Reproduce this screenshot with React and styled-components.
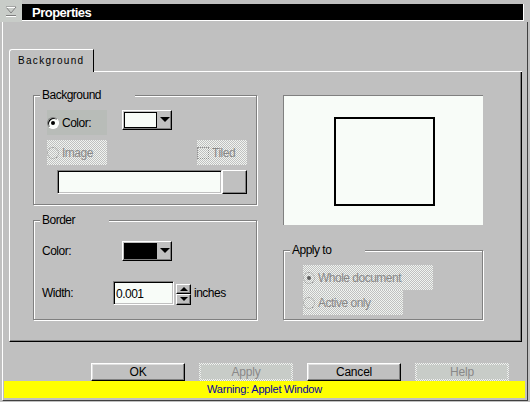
import React from "react"
import styled, { createGlobalStyle } from "styled-components"

const dither = "repeating-conic-gradient(#c0c0c0 0 25%, #f0f4f0 0 50%) 0 0 / 2px 2px"

const GlobalStyle = createGlobalStyle`
  html, body {
    margin: 0;
    padding: 0;
    background: #c0c0c0;
  }
  body {
    font-family: "Liberation Sans", Arial, sans-serif;
    font-size: 12px;
    letter-spacing: -0.5px;
    color: #000;
  }
`

const Window = styled.div`
  width: 530px;
  height: 402px;
  box-sizing: border-box;
  background: #c0c0c0;
  display: flex;
  flex-direction: column;
  overflow: hidden;
`

const TitleRow = styled.div`
  display: flex;
  height: 22px;
  flex-shrink: 0;
`

const SysIcon = styled.div`
  width: 22px;
  height: 22px;
  background: #c8ccc8;
  display: flex;
  align-items: center;
  justify-content: center;
`

const TitleBar = styled.div`
  margin-top: 4px;
  width: 502px;
  height: 17px;
  background: #000;
  border-right: 1px solid #fff;
  border-bottom: 1px solid #fff;
  color: #fff;
  font-weight: bold;
  font-size: 13px;
  letter-spacing: -0.5px;
  line-height: 17px;
  padding-left: 10px;
  box-sizing: border-box;
`

const Frame = styled.div`
  flex: 1;
  margin: 0 2px 1px 2px;
  border-left: 1px solid #fff;
  border-right: 1px solid #404040;
  border-bottom: 1px solid #404040;
  padding-top: 27px;
  display: flex;
  flex-direction: column;
`

const TabStrip = styled.div`
  display: flex;
  height: 23px;
  margin: 0 5px 0 6px;
`

const Tab = styled.div`
  width: 85px;
  box-sizing: border-box;
  border-top: 1px solid #fff;
  border-left: 1px solid #fff;
  border-right: 1px solid #000;
  border-top-left-radius: 3px;
  padding-left: 8px;
  font-size: 10px;
  letter-spacing: 1.3px;
  line-height: 22px;
`

const TabFiller = styled.div`
  flex: 1;
  border-bottom: 1px solid #fff;
`

const Panel = styled.div`
  height: 270px;
  box-sizing: border-box;
  margin: 0 5px 0 6px;
  border-left: 1px solid #fff;
  border-right: 1px solid #000;
  border-bottom: 1px solid #000;
  box-shadow: inset -1px -1px 0 #808080;
  padding: 23px 0 0 23px;
  display: grid;
  grid-template-columns: 224px 200px;
  column-gap: 26px;
  align-items: start;
`

const Column = styled.div`
  display: flex;
  flex-direction: column;
  gap: ${(p) => p.$gap}px;
`

const Group = styled.div`
  position: relative;
  box-sizing: border-box;
  height: ${(p) => p.$h}px;
  border: 1px solid #808080;
  box-shadow: 1px 1px 0 #fff, inset 1px 1px 0 #fff;
  padding: ${(p) => p.$pad};
  display: flex;
  flex-direction: column;
`

const Legend = styled.span`
  position: absolute;
  top: -8px;
  left: 6px;
  padding: 0 34px 0 2px;
  background: #c0c0c0;
  line-height: 14px;
`

const Row = styled.div`
  display: flex;
  align-items: ${(p) => p.$align || "flex-start"};
  margin-top: ${(p) => p.$mt || 0}px;
`

const Option = styled.div`
  width: ${(p) => p.$w}px;
  height: 25px;
  display: flex;
  align-items: center;
  background: ${(p) => (p.$disabled ? dither : "#b8bcb8")};
  color: ${(p) => (p.$disabled ? "#888" : "#000")};
  margin-left: ${(p) => p.$ml || 0}px;
`

const Radio = styled.span`
  width: 12px;
  height: 12px;
  box-sizing: border-box;
  border-radius: 50%;
  border: 1px solid;
  border-color: ${(p) => (p.$disabled ? "#909090" : "#808080 #fff #fff #808080")};
  border-style: ${(p) => (p.$disabled ? "dotted" : "solid")};
  background: ${(p) => (p.$disabled ? "transparent" : "#f8fcf8")};
  box-shadow: ${(p) => (p.$disabled ? "none" : "inset 1px 1px 0 #000")};
  display: flex;
  align-items: center;
  justify-content: center;
  margin-right: 3px;
  &::after {
    content: "";
    width: 4px;
    height: 4px;
    border-radius: 50%;
    background: ${(p) => (p.$disabled ? "#606060" : "#000")};
    display: ${(p) => (p.$checked ? "block" : "none")};
  }
`

const Check = styled.span`
  width: 12px;
  height: 12px;
  box-sizing: border-box;
  border: 1px dotted #909090;
  margin-right: 3px;
`

const ColorButton = styled.div`
  width: 50px;
  height: 20px;
  box-sizing: border-box;
  border: 1px solid;
  border-color: #fff #000 #000 #fff;
  box-shadow: inset -1px -1px 0 #808080;
  display: flex;
  align-items: center;
  padding: 0 0 1px 1px;
  margin-left: ${(p) => p.$ml || 0}px;
`

const Swatch = styled.span`
  width: 33px;
  height: 16px;
  box-sizing: border-box;
  border: 1px solid #000;
  background: ${(p) => p.$color};
`

const Arrow = styled.span`
  width: 0;
  height: 0;
  margin-left: 3px;
  border-left: 5px solid transparent;
  border-right: 5px solid transparent;
  border-top: ${(p) => (p.$up ? "none" : "5px solid #000")};
  border-bottom: ${(p) => (p.$up ? "5px solid #000" : "none")};
`

const TextField = styled.div`
  width: ${(p) => p.$w}px;
  height: ${(p) => p.$h}px;
  box-sizing: border-box;
  border: 1px solid;
  border-color: #808080 #fff #fff #808080;
  box-shadow: inset 1px 1px 0 #000, inset -1px -1px 0 #c0c0c0;
  background: #f8fcf8;
  margin-left: ${(p) => p.$ml || 0}px;
  padding: 4px 0 0 2px;
  line-height: 16px;
`

const SquareButton = styled.div`
  width: 25px;
  height: 24px;
  box-sizing: border-box;
  border: 1px solid;
  border-color: #fff #000 #000 #fff;
  box-shadow: inset -1px -1px 0 #808080;
`

const Label = styled.span`
  width: ${(p) => p.$w}px;
  flex-shrink: 0;
`

const Spinner = styled.div`
  display: flex;
  flex-direction: column;
  margin: 2px 3px 0 2px;
`

const SpinButton = styled.div`
  width: 15px;
  height: ${(p) => p.$h}px;
  box-sizing: border-box;
  border: 1px solid;
  border-color: #fff #000 #000 #fff;
  box-shadow: inset -1px -1px 0 #808080;
  display: flex;
  align-items: center;
  justify-content: center;
  & > span {
    margin-left: 0;
    border-left-width: 4px;
    border-right-width: 4px;
    border-top-width: 4px;
    border-bottom-width: 4px;
  }
`

const Preview = styled.div`
  width: 200px;
  height: 130px;
  box-sizing: border-box;
  background: #f8fcf8;
  border-top: 1px solid #808080;
  border-left: 1px solid #808080;
  padding: 21px 0 0 50px;
`

const Page = styled.div`
  width: 101px;
  height: 89px;
  box-sizing: border-box;
  border: 2px solid #000;
`

const ButtonRow = styled.div`
  display: flex;
  justify-content: flex-end;
  gap: 14px;
  padding-right: 18px;
  margin-top: 21px;
`

const DialogButton = styled.div`
  width: 94px;
  height: 18px;
  box-sizing: border-box;
  border: ${(p) => (p.$disabled ? "2px solid transparent" : "1px solid")};
  border-color: ${(p) => (p.$disabled ? "transparent" : "#fff #000 #000 #fff")};
  box-shadow: ${(p) => (p.$disabled ? "none" : "inset -1px -1px 0 #808080, inset 1px 1px 0 #dfdfdf")};
  background: ${(p) =>
    p.$disabled ? `linear-gradient(#c8ccc8, #c8ccc8) padding-box, ${dither}` : "#c0c0c0"};
  background-origin: border-box;
  color: ${(p) => (p.$disabled ? "#888" : "#000")};
  text-align: center;
  line-height: ${(p) => (p.$disabled ? 14 : 16)}px;
  letter-spacing: -0.2px;
`

const Warning = styled.div`
  height: 17px;
  margin: 0 2px 0 1px;
  background: #ffff00;
  color: #0000a0;
  font-size: 11px;
  letter-spacing: -0.2px;
  line-height: 17px;
  text-align: center;
`

const SysGlyph = () => (
  <svg width="12" height="11" viewBox="0 0 12 11">
    <path d="M1 1 H11 L6 7 Z" fill="none" stroke="#808080" strokeWidth="1" />
    <path d="M1.5 1.5 H10" stroke="#fff" strokeWidth="1" />
    <path d="M1 9.5 H11" stroke="#808080" strokeWidth="1" />
    <path d="M1 10.5 H11" stroke="#fff" strokeWidth="1" />
  </svg>
)

export default function App() {
  return (
    <>
      <GlobalStyle />
      <Window>
        <TitleRow>
          <SysIcon>
            <SysGlyph />
          </SysIcon>
          <TitleBar>Properties</TitleBar>
        </TitleRow>
        <Frame>
          <TabStrip>
            <Tab>Background</Tab>
            <TabFiller />
          </TabStrip>
          <Panel>
            <Column $gap={15}>
              <Group $h={110} $pad="14px 0 0 13px">
                <Legend>Background</Legend>
                <Row>
                  <Option $w={60}>
                    <Radio $checked />
                    Color:
                  </Option>
                  <ColorButton $ml={15}>
                    <Swatch $color="#f8fcf8" />
                    <Arrow />
                  </ColorButton>
                </Row>
                <Row $mt={5}>
                  <Option $w={60} $disabled>
                    <Radio $disabled />
                    Image
                  </Option>
                  <Option $w={50} $ml={90} $disabled>
                    <Check />
                    Tiled
                  </Option>
                </Row>
                <Row $mt={5}>
                  <TextField $w={165} $h={24} $ml={10} />
                  <SquareButton />
                </Row>
              </Group>
              <Group $h={100} $pad="20px 0 0 8px">
                <Legend>Border</Legend>
                <Row $align="center">
                  <Label $w={80}>Color:</Label>
                  <ColorButton>
                    <Swatch $color="#000" />
                    <Arrow />
                  </ColorButton>
                </Row>
                <Row $align="center" $mt={20}>
                  <Label $w={71}>Width:</Label>
                  <TextField $w={61} $h={24}>0.001</TextField>
                  <Spinner>
                    <SpinButton $h={10}>
                      <Arrow $up />
                    </SpinButton>
                    <SpinButton $h={11}>
                      <Arrow />
                    </SpinButton>
                  </Spinner>
                  <span>inches</span>
                </Row>
              </Group>
            </Column>
            <Column $gap={25}>
              <Preview>
                <Page />
              </Preview>
              <Group $h={70} $pad="14px 0 0 19px">
                <Legend>Apply to</Legend>
                <Option $w={130} $disabled>
                  <Radio $disabled $checked />
                  Whole document
                </Option>
                <Option $w={100} $disabled>
                  <Radio $disabled />
                  Active only
                </Option>
              </Group>
            </Column>
          </Panel>
          <ButtonRow>
            <DialogButton>OK</DialogButton>
            <DialogButton $disabled>Apply</DialogButton>
            <DialogButton>Cancel</DialogButton>
            <DialogButton $disabled>Help</DialogButton>
          </ButtonRow>
          <Warning>Warning: Applet Window</Warning>
        </Frame>
      </Window>
    </>
  )
}
